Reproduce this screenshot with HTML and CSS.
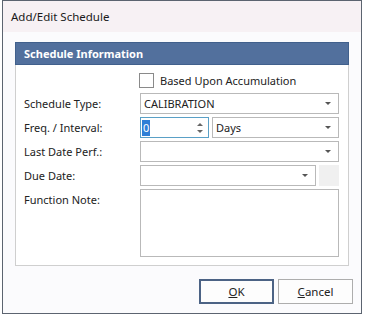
FILE: index.html
```html
<!DOCTYPE html>
<html lang="en">
<head>
  <meta charset="UTF-8">
  <title>Add/Edit Schedule</title>
  <link rel="stylesheet" href="styles.css">
</head>
<body>
  <div class="window">
    <div class="titlebar">Add/Edit Schedule</div>
    <div class="content">
      <div class="group">
        <div class="group-header">Schedule Information</div>
        <div class="group-body">
          <div class="check-row">
            <span class="checkbox"></span>
            <span>Based Upon Accumulation</span>
          </div>
          <div class="form-grid">
            <label class="lbl">Schedule Type:</label>
            <div class="combo"><span>CALIBRATION</span><span class="arrow"></span></div>

            <label class="lbl">Freq. / Interval:</label>
            <div class="pair">
              <div class="spin">
                <span class="sel">0</span>
                <span class="spin-btns">
                  <span class="up"></span>
                  <span class="down"></span>
                </span>
              </div>
              <div class="combo grow"><span>Days</span><span class="arrow"></span></div>
            </div>

            <label class="lbl">Last Date Perf.:</label>
            <div class="combo"><span></span><span class="arrow"></span></div>

            <label class="lbl">Due Date:</label>
            <div class="pair">
              <div class="combo grow"><span></span><span class="arrow"></span></div>
              <div class="date-btn"></div>
            </div>

            <label class="lbl">Function Note:</label>
            <div class="note"></div>
          </div>
        </div>
      </div>
      <div class="buttons">
        <button class="btn default"><u>O</u>K</button>
        <button class="btn"><u>C</u>ancel</button>
      </div>
    </div>
  </div>
</body>
</html>
```

FILE: styles.css
```css
body {
  margin: 0;
  background: #fff;
  font-family: 'Noto Sans', 'Open Sans', sans-serif;
  font-size: 11px;
  color: #222;
}
.window {
  margin-left: 2px;
  width: 360px;
  height: 314px;
  box-sizing: border-box;
  border: 1px solid #5c6470;
  background: #fbfbfd;
  display: flex;
  flex-direction: column;
}
.titlebar {
  height: 31px;
  background: #f7f1f4;
  padding-left: 8px;
  line-height: 31px;
  font-size: 11.5px;
  color: #1a1a1a;
}
.content {
  padding: 10px 12px 0;
}
.group {
  width: 334px;
  box-sizing: border-box;
  border: 1px solid #cfcfcf;
  background: #fff;
}
.group-header {
  height: 21px;
  margin: -1px -1px 0;
  background: #52709d;
  border: 1px solid #41608c;
  color: #fff;
  font-weight: bold;
  line-height: 21px;
  padding-left: 8px;
}
.group-body {
  padding: 8px 9px 8px 8px;
}
.check-row {
  display: flex;
  align-items: center;
  gap: 6px;
  margin-left: 115px;
  height: 15px;
  margin-bottom: 5px;
}
.checkbox {
  width: 13px;
  height: 13px;
  border: 1px solid #8a8a8a;
  background: #fff;
}
.form-grid {
  display: grid;
  grid-template-columns: 116px 199px;
  row-gap: 3px;
}
.lbl {
  line-height: 21px;
  color: #222;
}
.combo {
  height: 21px;
  box-sizing: border-box;
  border: 1px solid #b9b9b9;
  background: #fff;
  display: flex;
  align-items: center;
  justify-content: space-between;
  padding: 0 7px 0 3px;
}
.arrow {
  width: 0;
  height: 0;
  border-left: 3px solid transparent;
  border-right: 3px solid transparent;
  border-top: 3px solid #555;
}
.pair {
  display: flex;
  gap: 3px;
}
.grow {
  flex: 1;
}
.spin {
  width: 69px;
  height: 21px;
  box-sizing: border-box;
  border: 1px solid #5aa0c6;
  background: #fff;
  display: flex;
  align-items: center;
  justify-content: space-between;
  padding: 0 5px 0 1px;
}
.sel {
  background: #2f7fd6;
  color: #fff;
  padding: 0 1px;
  line-height: 16px;
}
.spin-btns {
  display: flex;
  flex-direction: column;
  gap: 4px;
}
.up {
  border-left: 3px solid transparent;
  border-right: 3px solid transparent;
  border-bottom: 3px solid #666;
}
.down {
  border-left: 3px solid transparent;
  border-right: 3px solid transparent;
  border-top: 3px solid #666;
}
.date-btn {
  width: 20px;
  height: 21px;
  background: #f0f0f0;
}
.note {
  height: 68px;
  box-sizing: border-box;
  border: 1px solid #b9b9b9;
  background: #fff;
}
.buttons {
  display: flex;
  justify-content: flex-end;
  gap: 4px;
  margin-top: 13px;
  margin-right: -4px;
}
.btn {
  width: 75px;
  height: 25px;
  box-sizing: border-box;
  border: 1px solid #adadad;
  background: #fdfdfd;
  font-family: 'Noto Sans', 'Open Sans', sans-serif;
  font-size: 11.5px;
  color: #222;
  padding: 0;
}
.btn.default {
  border: 2px solid #4c6385;
}
```
